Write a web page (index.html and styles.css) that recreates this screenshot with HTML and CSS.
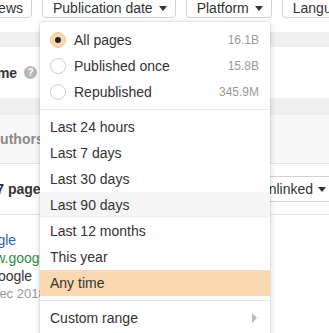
FILE: index.html
```html
<!DOCTYPE html>
<html lang="en">
<head>
    <meta charset="UTF-8">
    <title>Publication date filter</title>
    <link rel="stylesheet" href="styles.css">
</head>
<body>
    <div class="toolbar">
        <div class="tb-btn btn-news">News</div>
        <div class="tb-btn">Publication date <span class="caret"></span></div>
        <div class="tb-btn">Platform <span class="caret"></span></div>
        <div class="tb-btn">Language <span class="caret"></span></div>
    </div>

    <div class="band"></div>
    <div class="row row-name">
        <span class="label-bold shift-name">Name</span>
        <span class="help">?</span>
    </div>
    <div class="band band-tall"></div>
    <div class="row row-authors">
        <span class="label-gray shift-authors">Authors</span>
    </div>
    <div class="row row-count">
        <span class="label-bold shift-count">1,057 pages</span>
        <div class="link-btn">Unlinked <span class="caret"></span></div>
    </div>
    <div class="result">
        <div class="r-title">Google</div>
        <div class="r-url">www.google.com</div>
        <div class="r-site">Google</div>
        <div class="r-date">Dec 2018</div>
    </div>

    <div class="menu">
        <div class="item radio-item">
            <span class="radio checked"></span>
            <span class="item-text">All pages</span>
            <span class="count">16.1B</span>
        </div>
        <div class="item radio-item">
            <span class="radio"></span>
            <span class="item-text">Published once</span>
            <span class="count">15.8B</span>
        </div>
        <div class="item radio-item">
            <span class="radio"></span>
            <span class="item-text">Republished</span>
            <span class="count">345.9M</span>
        </div>
        <div class="sep"></div>
        <div class="item">Last 24 hours</div>
        <div class="item">Last 7 days</div>
        <div class="item">Last 30 days</div>
        <div class="item hover">Last 90 days</div>
        <div class="item">Last 12 months</div>
        <div class="item">This year</div>
        <div class="item active">Any time</div>
        <div class="sep"></div>
        <div class="item submenu">
            <span class="item-text">Custom range</span>
            <span class="arrow-right"></span>
        </div>
    </div>
</body>
</html>
```

FILE: styles.css
```css
html, body {
    margin: 0;
    padding: 0;
}

body {
    font-family: 'Liberation Sans', Arial, sans-serif;
    font-size: 14px;
    color: #333;
    background: #fff;
    position: relative;
    width: 329px;
    height: 333px;
    overflow: hidden;
}

/* toolbar */
.toolbar {
    display: flex;
    gap: 10px;
    height: 32px;
    margin-left: -40px;
}

.tb-btn {
    flex: none;
    display: flex;
    align-items: center;
    gap: 6px;
    height: 28px;
    margin-top: -10px;
    padding: 8px 8px 0 10px;
    border: 1px solid #d2d2d2;
    border-radius: 4px;
    box-sizing: border-box;
    font-size: 14px;
    color: #333;
    white-space: nowrap;
}

.btn-news {
    width: 72px;
    justify-content: flex-end;
}

.caret {
    display: inline-block;
    width: 0;
    height: 0;
    border-left: 4px solid transparent;
    border-right: 4px solid transparent;
    border-top: 5px solid #333;
}

/* page behind menu */
.band {
    height: 15px;
    background: #efefef;
}

.band-tall {
    height: 17px;
}

.row {
    display: flex;
    align-items: center;
    white-space: nowrap;
}

.row-name {
    height: 51px;
    gap: 5px;
}

.label-bold {
    font-weight: bold;
    color: #333;
}

.shift-name {
    margin-left: -21px;
}

.help {
    display: inline-flex;
    align-items: center;
    justify-content: center;
    width: 13px;
    height: 13px;
    border-radius: 50%;
    background: #b5b5b5;
    color: #fff;
    font-size: 10px;
    font-weight: bold;
    margin-left: 2px;
}

.row-authors {
    height: 48px;
    background: #f7f7f7;
    border-bottom: 1px solid #e4e4e4;
}

.label-gray {
    font-weight: bold;
    color: #8a8a8a;
}

.shift-authors {
    margin-left: -10px;
}

.row-count {
    height: 50px;
    border-bottom: 1px solid #e4e4e4;
    justify-content: space-between;
}

.shift-count {
    margin-left: -31px;
}

.link-btn {
    display: flex;
    align-items: center;
    gap: 5px;
    height: 26px;
    box-sizing: border-box;
    padding: 0 3px 0 7px;
    border: 1px solid #d2d2d2;
    border-radius: 4px 0 0 4px;
    border-right: none;
    color: #333;
}

.result {
    padding-top: 16px;
    line-height: 18px;
    white-space: nowrap;
}

.r-title {
    color: #2d5fbd;
    margin-left: -29px;
}

.r-url {
    color: #2f8f3f;
    margin-left: -25px;
}

.r-site {
    color: #333;
    margin-left: -13px;
}

.r-date {
    color: #999;
    font-size: 13px;
    margin-left: -10px;
}

/* dropdown menu */
.menu {
    position: absolute;
    top: 22px;
    left: 40px;
    width: 230px;
    height: 330px;
    padding-top: 5px;
    background: #fff;
    border-radius: 3px;
    box-shadow: 0 1px 6px rgba(0, 0, 0, 0.18), 0 0 0 1px rgba(0, 0, 0, 0.04);
    box-sizing: border-box;
}

.item {
    display: flex;
    align-items: center;
    height: 26px;
    padding: 0 11px 0 10px;
    font-size: 14px;
    color: #333;
}

.radio-item {
    gap: 8px;
}

.item-text {
    flex: 1;
}

.radio {
    width: 16px;
    height: 16px;
    box-sizing: border-box;
    border: 1px solid #cfcfcf;
    border-radius: 50%;
    display: flex;
    align-items: center;
    justify-content: center;
}

.radio.checked {
    background: #fad8ae;
    border-color: #f3c690;
}

.radio.checked::after {
    content: '';
    width: 6px;
    height: 6px;
    border-radius: 50%;
    background: #222;
}

.count {
    font-size: 12px;
    color: #999;
}

.sep {
    height: 1px;
    background: #e8e8e8;
    margin: 4px 0;
}

.item.hover {
    background: #f5f5f5;
}

.item.active {
    background: #fad9b0;
}

.arrow-right {
    width: 0;
    height: 0;
    border-top: 5px solid transparent;
    border-bottom: 5px solid transparent;
    border-left: 5px solid #bbb;
    margin-right: 2px;
}
```
